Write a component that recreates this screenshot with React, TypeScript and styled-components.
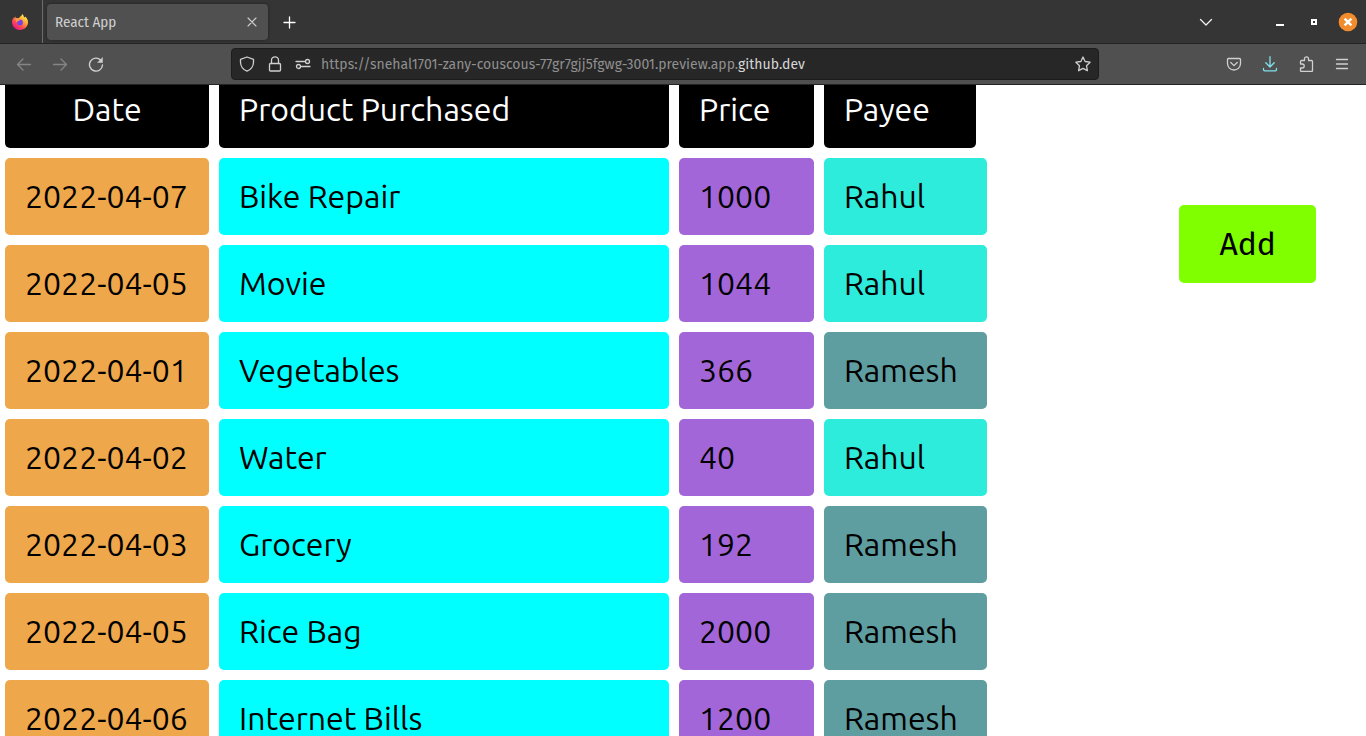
import React from "react";
import styled, { createGlobalStyle } from "styled-components";

const GlobalStyle = createGlobalStyle`
  * { box-sizing: border-box; }
  body { margin: 0; background: #fff; }
  button, input { font: inherit; }
`;

const Window = styled.div`
  display: flex;
  flex-direction: column;
  height: 100vh;
  overflow: hidden;
  font-family: "Fira Sans", "Noto Sans", sans-serif;
`;

const TabStrip = styled.header`
  display: flex;
  align-items: center;
  flex: none;
  height: 44px;
  padding-right: 2px;
  background: #353535;
  border-bottom: 1px solid #232323;
`;

const AppMark = styled.div`
  display: flex;
  align-items: center;
  justify-content: center;
  width: 43px;
  height: 43px;
  padding-right: 2px;
  border-right: 1px solid #6b6b6b;
`;

const Tab = styled.div`
  display: flex;
  align-items: center;
  justify-content: space-between;
  width: 221px;
  height: 36px;
  margin: 0 3px 0 4px;
  padding: 0 4px 0 8px;
  border-radius: 4px;
  background: #505050;
  box-shadow: 0 0 3px #202020;
  color: #cfcfcf;
  font-family: "Fira Sans Condensed", "Fira Sans", "Noto Sans", sans-serif;
  font-size: 15px;
`;

const IconButton = styled.button<{ $tone?: string; $width?: number }>`
  display: flex;
  align-items: center;
  justify-content: center;
  flex: none;
  width: ${(p) => p.$width ?? 36}px;
  height: 24px;
  padding: 0;
  border: 0;
  background: transparent;
  color: ${(p) => p.$tone ?? "#d0d0d0"};
`;

const WindowControls = styled.div`
  display: flex;
  align-items: center;
  margin-left: auto;
`;

const ListTabs = styled.div`
  margin-right: 40px;
`;

const Toolbar = styled.nav`
  display: flex;
  align-items: center;
  flex: none;
  height: 41px;
  padding: 0 6px;
  background: #505050;
  border-bottom: 1px solid #232323;
`;

const NavGroup = styled.div`
  display: flex;
  width: 225px;
`;

const AddressBar = styled.div`
  display: flex;
  align-items: center;
  flex: 1;
  height: 32px;
  padding: 0 1px;
  border: 1px solid #1c1c1c;
  border-radius: 4px;
  background: #272727;
`;

const Address = styled.a`
  flex: 1;
  padding: 2px 0 0 4px;
  color: #8f8f8f;
  font-size: 14px;
  line-height: 20px;
  text-decoration: none;
  white-space: nowrap;
`;

const Domain = styled.span`
  color: #d6d6d6;
`;

const Actions = styled.div`
  display: flex;
  margin-left: 117px;
`;

const Page = styled.main`
  display: flex;
  align-items: flex-start;
  justify-content: space-between;
  flex: 1;
  min-height: 0;
  padding: 0 50px 0 5px;
  overflow: hidden;
  background: #fff;
`;

const Ledger = styled.table`
  display: block;
  color: #000;
  font-family: Ubuntu, "Noto Sans", sans-serif;
  font-size: 32px;
  font-weight: 400;
  font-variation-settings: "wght" 400;
  line-height: 37px;
`;

const LedgerHead = styled.thead`
  display: block;
`;

const LedgerBody = styled.tbody`
  display: block;
`;

const Row = styled.tr`
  display: flex;
  gap: 10px;
  margin-bottom: 10px;
`;

const HeadCell = styled.th<{ $width: number; $align?: string }>`
  width: ${(p) => p.$width}px;
  padding: 6px 20px 20px;
  border-radius: 0 0 5px 5px;
  background: #000;
  color: #fff;
  font-weight: 400;
  text-align: ${(p) => p.$align ?? "left"};
  white-space: nowrap;
`;

const Cell = styled.td<{ $width: number; $fill: string }>`
  width: ${(p) => p.$width}px;
  padding: 20px;
  border-radius: 5px;
  background: ${(p) => p.$fill};
  white-space: nowrap;
`;

const AddButton = styled.button`
  margin-top: 120px;
  padding: 20px 40px;
  border: 0;
  border-radius: 5px;
  background: #80ff00;
  color: #000;
  font-size: 32px;
  line-height: 38px;
`;

const payeeFill: Record<string, string> = {
  Rahul: "#2eecdc",
  Ramesh: "#5f9ea0",
};

const expenses = [
  { date: "2022-04-07", product: "Bike Repair", price: 1000, payee: "Rahul" },
  { date: "2022-04-05", product: "Movie", price: 1044, payee: "Rahul" },
  { date: "2022-04-01", product: "Vegetables", price: 366, payee: "Ramesh" },
  { date: "2022-04-02", product: "Water", price: 40, payee: "Rahul" },
  { date: "2022-04-03", product: "Grocery", price: 192, payee: "Ramesh" },
  { date: "2022-04-05", product: "Rice Bag", price: 2000, payee: "Ramesh" },
  { date: "2022-04-06", product: "Internet Bills", price: 1200, payee: "Ramesh" },
];

function Icon({ children }: { children: React.ReactNode }) {
  return (
    <svg width="16" height="16" viewBox="0 0 16 16" fill="none" stroke="currentColor" strokeWidth="1.3" strokeLinecap="round" strokeLinejoin="round" aria-hidden="true">
      {children}
    </svg>
  );
}

function FirefoxLogo() {
  return (
    <svg width="16" height="16" viewBox="0 0 16 16" role="img" aria-label="Firefox">
      <defs>
        <linearGradient id="flame" x1="0.85" y1="0.1" x2="0.2" y2="0.95">
          <stop offset="0" stopColor="#fff44f" />
          <stop offset="0.35" stopColor="#ffa436" />
          <stop offset="0.65" stopColor="#ff4f4f" />
          <stop offset="1" stopColor="#e3128c" />
        </linearGradient>
      </defs>
      <path fill="url(#flame)" d="M10.3 0c1.100.9 1.500 1.900 1.500 2.700.6.1 1 .6 1.200 1 0-.4 0-.8-.1-1.200C14.900 3.800 16 5.800 16 8.300 16 12.700 12.400 16 8 16S0 12.600 0 8.200c0-2 .8-3.500 1.700-4.700 0 .4 0 .8.2 1.100C2.200 3.600 2.900 2.900 3.400 2.600c0 .7.2 1.200.6 1.500 1-.3 2-.2 2.800.1C7.600 2.600 9.800 2.300 10.300 0z" />
      <circle cx="8" cy="8.400" r="2.900" fill="#7542e5" />
      <path fill="#ff9640" d="M3.600 4.300c1.900-.8 3.900 0 4.900 1.400-.6.8-1.500 1-2.300 1.300-.8.4-1 1-.8 1.700-1.200-.6-2-2.200-1.800-4.400z" />
    </svg>
  );
}

export default function App() {
  return (
    <Window>
      <GlobalStyle />
      <TabStrip>
        <AppMark><FirefoxLogo /></AppMark>
        <Tab>
          React App
          <IconButton aria-label="Close tab" $width={24}>
            <Icon><path d="M4 4l8 8M12 4l-8 8" strokeWidth="1.100" /></Icon>
          </IconButton>
        </Tab>
        <IconButton aria-label="New tab" $tone="#fff" $width={35}>
          <Icon><path d="M8.500 3v11M3 8.500h11" strokeWidth="1.300" /></Icon>
        </IconButton>
        <WindowControls>
          <ListTabs>
            <IconButton aria-label="List all tabs" $tone="#f0f0f0">
              <Icon><path d="M2.500 5.500L8 11l5.500-5.500" /></Icon>
            </IconButton>
          </ListTabs>
          <IconButton aria-label="Minimize" $tone="#fff" $width={32}>
            <Icon><path d="M4 11h8" strokeWidth="2" strokeLinecap="butt" /></Icon>
          </IconButton>
          <IconButton aria-label="Maximize" $tone="#fff">
            <Icon><path d="M6 6h4v4H6z" strokeWidth="2" strokeLinejoin="miter" /></Icon>
          </IconButton>
          <IconButton aria-label="Close window" $width={32}>
            <svg width="20" height="20" viewBox="0 0 20 20" aria-hidden="true">
              <circle cx="10" cy="10" r="9.300" fill="#f28c2c" />
              <path d="M6.600 6.600l6.800 6.800M13.400 6.600l-6.800 6.800" stroke="#fff" strokeWidth="2.400" />
            </svg>
          </IconButton>
        </WindowControls>
      </TabStrip>
      <Toolbar>
        <NavGroup>
          <IconButton aria-label="Back" $tone="#858585">
            <Icon><path d="M14.500 8.500h-13M7 3L1.500 8.500 7 14" /></Icon>
          </IconButton>
          <IconButton aria-label="Forward" $tone="#858585">
            <Icon><path d="M1.500 8.500h13M9 3l5.500 5.500L9 14" /></Icon>
          </IconButton>
          <IconButton aria-label="Reload">
            <Icon><path d="M12.800 4.200A6.500 6.500 0 1 0 14.500 9" strokeWidth="1.400" /><path d="M14.500 1.800v4.700H9.800z" fill="currentColor" strokeWidth="0.500" /></Icon>
          </IconButton>
        </NavGroup>
        <AddressBar>
          <IconButton aria-label="Tracking protection" $width={28}>
            <Icon><path d="M8 1l6.500 2.300v3C14.500 10.500 11.500 14 8 15.200 4.500 14 1.500 10.500 1.500 6.300v-3z" /></Icon>
          </IconButton>
          <IconButton aria-label="Site information" $width={28}>
            <Icon><rect x="2.500" y="7.500" width="11" height="7.500" rx="1" /><path d="M4.500 7.500V4.300a3.500 3.500 0 0 1 7 0v3.200" /></Icon>
          </IconButton>
          <IconButton aria-label="Permissions" $width={28}>
            <Icon><path d="M1 5.500h8.500M6.500 10.500H15" /><circle cx="12.500" cy="5.500" r="2" /><circle cx="3.500" cy="10.500" r="2" /></Icon>
          </IconButton>
          <Address href="#">https://snehal1701-zany-couscous-77gr7gjj5fgwg-3001.preview.app.<Domain>github.dev</Domain></Address>
          <IconButton aria-label="Bookmark" $width={28}>
            <Icon><path d="M8 1l2.100 4.500 5 .7-3.600 3.500.9 5L8 12.400l-4.400 2.300.9-5L.9 6.200l5-.7z" /></Icon>
          </IconButton>
        </AddressBar>
        <Actions>
          <IconButton aria-label="Save to Pocket">
            <Icon><path d="M2.500 2.500h11a1 1 0 0 1 1 1V7.500a6.500 6.500 0 0 1-13 0V3.500a1 1 0 0 1 1-1zM4.800 6.500L8 9.600l3.200-3.100" /></Icon>
          </IconButton>
          <IconButton aria-label="Downloads" $tone="#80e0ea">
            <Icon><path d="M8 .7v10M3.800 6.800L8 11l4.200-4.200M1.500 12.500v1a1.300 1.300 0 0 0 1.300 1.300h10.400a1.300 1.300 0 0 0 1.300-1.300v-1" /></Icon>
          </IconButton>
          <IconButton aria-label="Extensions">
            <Icon><path d="M2.500 8V5.500a1 1 0 0 1 1-1h3V2.800a2 2 0 0 1 4 0v1.700h3a1 1 0 0 1 1 1v9a1 1 0 0 1-1 1h-10a1 1 0 0 1-1-1V12h1.700a2 2 0 0 0 0-4z" /></Icon>
          </IconButton>
          <IconButton aria-label="Menu">
            <Icon><path d="M2.500 3.500h11M2.500 8h11M2.500 12.500h11" /></Icon>
          </IconButton>
        </Actions>
      </Toolbar>
      <Page>
        <Ledger>
          <LedgerHead>
            <Row>
              <HeadCell $width={204} $align="center">Date</HeadCell>
              <HeadCell $width={450}>Product Purchased</HeadCell>
              <HeadCell $width={135}>Price</HeadCell>
              <HeadCell $width={152}>Payee</HeadCell>
            </Row>
          </LedgerHead>
          <LedgerBody>
            {expenses.map((e, i) => (
              <Row key={i}>
                <Cell $width={204} $fill="#eea74b">{e.date}</Cell>
                <Cell $width={450} $fill="#00ffff">{e.product}</Cell>
                <Cell $width={135} $fill="#a366d9">{e.price}</Cell>
                <Cell $width={163} $fill={payeeFill[e.payee]}>{e.payee}</Cell>
              </Row>
            ))}
          </LedgerBody>
        </Ledger>
        <AddButton>Add</AddButton>
      </Page>
    </Window>
  );
}
